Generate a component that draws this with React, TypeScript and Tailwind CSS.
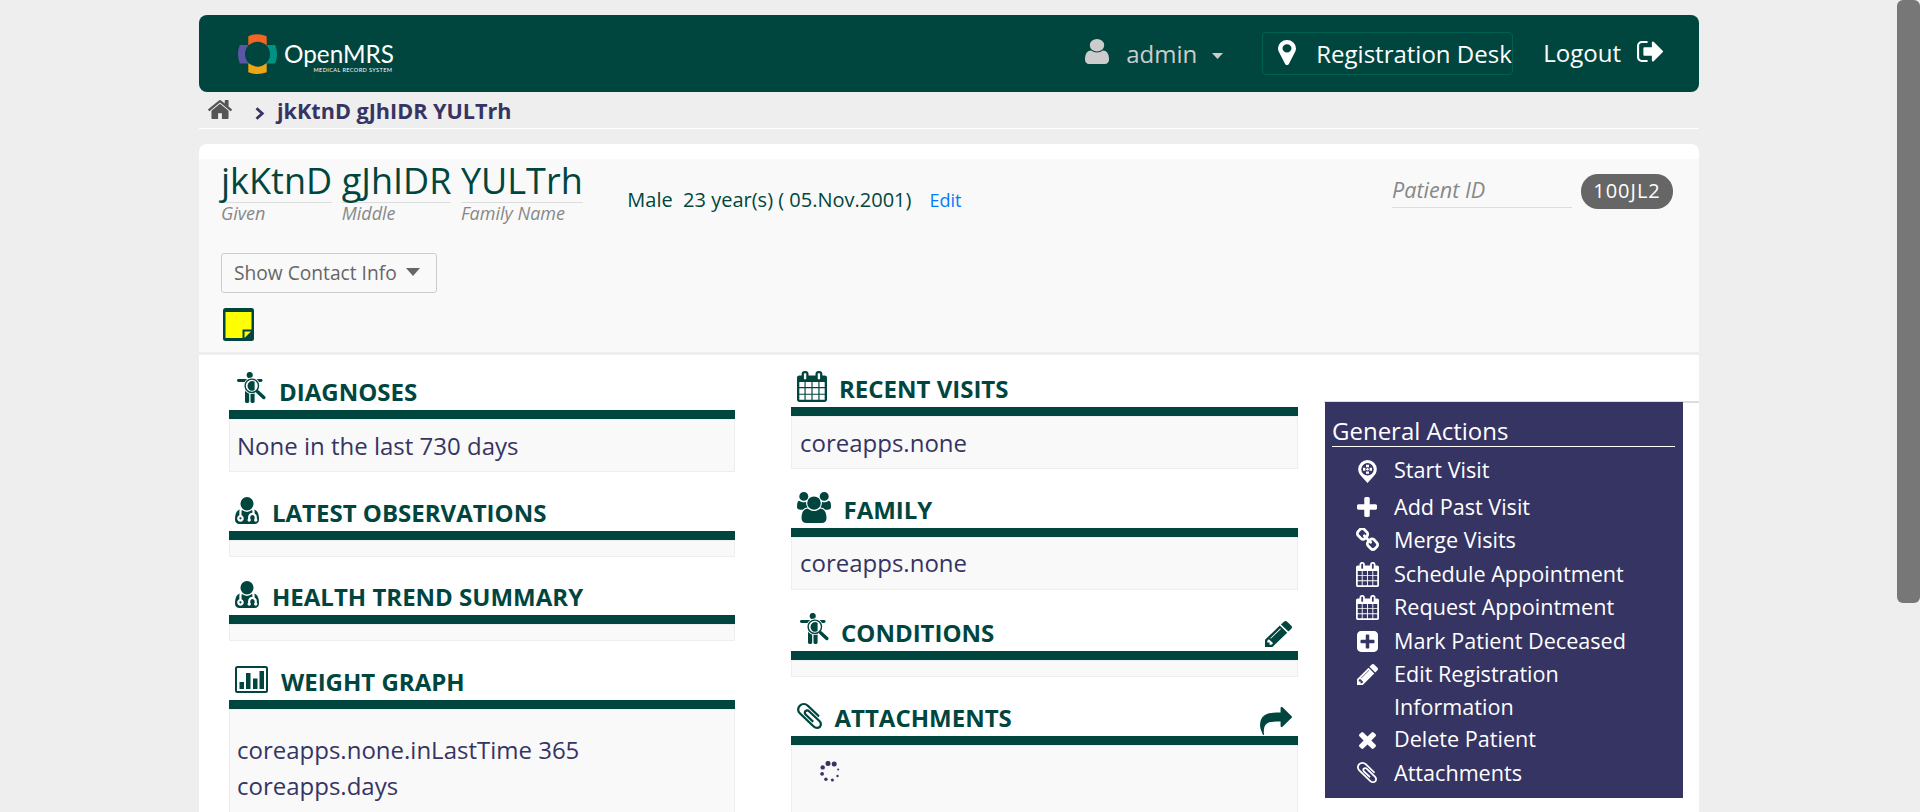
import React from "react";

const PATHS = {
  calendar: {
    box: "64 0 1664 1792",
    d: "M192 1664h288v-288h-288v288zm352 0h320v-288h-320v288zm-352-352h288v-320h-288v320zm352 0h320v-320h-320v320zm-352-384h288v-288h-288v288zm736 736h320v-288h-320v288zm-384-736h320v-288h-320v288zm768 736h288v-288h-288v288zm-384-352h320v-320h-320v320zm-352-864v-288q0-13-9.5-22.5t-22.5-9.5h-64q-13 0-22.5 9.5t-9.5 22.5v288q0 13 9.5 22.5t22.5 9.5h64q13 0 22.5-9.5t9.5-22.5zm736 864h288v-320h-288v320zm-384-384h320v-288h-320v288zm384 0h288v-288h-288v288zm32-480v-288q0-13-9.5-22.5t-22.5-9.5h-64q-13 0-22.5 9.5t-9.5 22.5v288q0 13 9.5 22.5t22.5 9.5h64q13 0 22.5-9.5t9.5-22.5zm384-64v1280q0 52-38 90t-90 38h-1408q-52 0-90-38t-38-90v-1280q0-52 38-90t90-38h128v-96q0-66 47-113t113-47h64q66 0 113 47t47 113v96h384v-96q0-66 47-113t113-47h64q66 0 113 47t47 113v96h128q52 0 90 38t38 90z",
  },
  pencil: {
    box: "128 149 1516 1516",
    d: "M491 1536l91-91-235-235-91 91v107h128v128h107zm523-928q0-22-22-22-10 0-17 7l-542 542q-7 7-7 17 0 22 22 22 10 0 17-7l542-542q7-7 7-17zm-54-192l416 416-832 832h-416v-416zm683 96q0 53-37 90l-166 166-416-416 166-165q36-38 90-38 53 0 91 38l235 234q37 39 37 91z",
  },
  plus: {
    box: "192 128 1408 1408",
    d: "M1600 736v192q0 40-28 68t-68 28h-416v416q0 40-28 68t-68 28h-192q-40 0-68-28t-28-68v-416h-416q-40 0-68-28t-28-68v-192q0-40 28-68t68-28h416v-416q0-40 28-68t68-28h192q40 0 68 28t28 68v416h416q40 0 68 28t28 68z",
  },
  times: {
    box: "302 366 1188 1188",
    d: "M1490 1322q0 40-28 68l-136 136q-28 28-68 28t-68-28l-294-294-294 294q-28 28-68 28t-68-28l-136-136q-28-28-28-68t28-68l294-294-294-294q-28-28-28-68t28-68l136-136q28-28 68-28t68 28l294 294 294-294q28-28 68-28t68 28l136 136q28 28 28 68t-28 68l-294 294 294 294q28 28 28 68z",
  },
  plusSquare: {
    box: "128 128 1536 1536",
    d: "M1408 960v-128q0-26-19-45t-45-19h-320v-320q0-26-19-45t-45-19h-128q-26 0-45 19t-19 45v320h-320q-26 0-45 19t-19 45v128q0 26 19 45t45 19h320v320q0 26 19 45t45 19h128q26 0 45-19t19-45v-320h320q26 0 45-19t19-45zm256-544v960q0 119-84.5 203.5t-203.5 84.5h-960q-119 0-203.5-84.5t-84.5-203.5v-960q0-119 84.5-203.5t203.5-84.5h960q119 0 203.5 84.5t84.5 203.5z",
  },
  home: {
    box: "88 250 1616 1288",
    d: "M1472 992v480q0 26-19 45t-45 19h-384v-384h-256v384h-384q-26 0-45-19t-19-45v-480q0-1 .5-3t.5-3l575-474 575 474q1 2 1 6zm223-69l-62 74q-8 9-21 11h-3q-13 0-21-7l-692-577-692 577q-12 8-24 7-13-2-21-11l-62-74q-8-10-7-23.5t11-21.5l719-599q32-26 76-26t76 26l244 204v-195q0-14 9-23t23-9h192q14 0 23 9t9 23v408l219 182q10 8 11 21.5t-7 23.5z",
  },
  marker: {
    box: "384 128 1024 1536",
    d: "M1152 640q0-106-75-181t-181-75-181 75-75 181 75 181 181 75 181-75 75-181zm256 0q0 109-33 179l-364 774q-16 33-47.5 52t-67.5 19-67.5-19-46.5-52l-365-774q-33-70-33-179 0-212 150-362t362-150 362 150 150 362z",
  },
  user: {
    box: "256 128 1280 1536",
    d: "M1536 1399q0 109-62.5 187t-150.5 78h-854q-88 0-150.5-78t-62.5-187q0-85 8.5-160.5t31.5-152 58.5-131 94-89 134.5-34.5q131 128 313 128t313-128q76 0 134.5 34.5t94 89 58.5 131 31.5 152 8.5 160.5zm-256-887q0 159-112.5 271.5t-271.5 112.5-271.5-112.5-112.5-271.5 112.5-271.5 271.5-112.5 271.5 112.5 112.5 271.5z",
  },
  signout: {
    box: "64 256 1568 1280",
    d: "M704 1440q0 4 1 20t.5 26.5-3 23.5-10 19.5-20.5 6.5h-320q-119 0-203.5-84.5t-84.5-203.5v-704q0-119 84.5-203.5t203.5-84.5h320q13 0 22.5 9.5t9.5 22.5q0 4 1 20t.5 26.5-3 23.5-10 19.5-20.5 6.5h-320q-66 0-113 47t-47 113v704q0 66 47 113t113 47h312l11.5 1 11.5 3 8 5.5 7 9 2 13.5zm928-544q0 26-19 45l-544 544q-19 19-45 19t-45-19-19-45v-288h-448q-26 0-45-19t-19-45v-384q0-26 19-45t45-19h448v-288q0-26 19-45t45-19 45 19l544 544q19 19 19 45z",
  },
  share: {
    box: "0 64 1792 1600",
    d: "M1792 640q0 26-19 45l-512 512q-19 19-45 19t-45-19-19-45v-256h-224q-98 0-175.5 6t-154 21.5-133 42.5-105.5 69.5-80 101-48.5 138.5-17.5 181q0 55 5 123 0 6 2.5 23.5t2.5 26.5q0 15-8.5 25t-23.5 10q-16 0-28-17-7-9-13-22t-13.5-30-10.5-24q-127-285-127-451 0-199 53-333 162-403 875-403h224v-256q0-26 19-45t45-19 45 19l512 512q19 19 19 45z",
  },
  chain: {
    box: "80 80 1632 1568",
    d: "M1520 1216q0-40-28-68l-208-208q-28-28-68-28-42 0-72 32 3 3 19 18.5t21.5 21.5 15 19 13 25.5 3.5 27.5q0 40-28 68t-68 28q-15 0-27.5-3.5t-25.5-13-19-15-21.5-21.5-18.5-19q-33 31-33 73 0 40 28 68l206 207q27 27 68 27 40 0 68-26l147-146q28-28 28-67zm-703-705q0-40-28-68l-206-207q-28-28-68-28-39 0-68 27l-147 146q-28 28-28 67 0 40 28 68l208 208q27 27 68 27 42 0 72-31-3-3-19-18.5t-21.5-21.5-15-19-13-25.5-3.5-27.5q0-40 28-68t68-28q15 0 27.5 3.5t25.5 13 19 15 21.5 21.5 18.5 19q33-31 33-73zm895 705q0 120-85 203l-147 146q-83 83-203 83-121 0-204-85l-206-207q-83-83-83-203 0-123 88-209l-88-88q-86 88-208 88-120 0-204-84l-208-208q-84-84-84-204t85-203l147-146q83-83 203-83 121 0 204 85l206 207q83 83 83 203 0 123-88 209l88 88q86-88 208-88 120 0 204 84l208 208q84 84 84 204z",
  },
  users: {
    box: "0 0 1920 1792",
    d: "M593 896q-162 5-265 128h-134q-82 0-138-40.5t-56-118.5q0-353 124-353 6 0 43.5 21t97.5 42.5 119 21.5q67 0 133-23-5 37-5 66 0 139 81 256zm1071 637q0 120-73 189.5t-194 69.5h-874q-121 0-194-69.5t-73-189.5q0-53 3.5-103.5t14-109 26.5-108.5 43-97.5 62-81 85.5-53.5 111.5-20q10 0 43 21.5t73 48 107 48 135 21.5 135-21.5 107-48 73-48 43-21.5q61 0 111.5 20t85.5 53.5 62 81 43 97.5 26.5 108.5 14 109 3.5 103.5zm-1024-1277q0 106-75 181t-181 75-181-75-75-181 75-181 181-75 181 75 75 181zm704 384q0 159-112.5 271.5t-271.5 112.5-271.5-112.5-112.5-271.5 112.5-271.5 271.5-112.5 271.5 112.5 112.5 271.5zm576 225q0 78-56 118.5t-138 40.5h-134q-103-123-265-128 81-117 81-256 0-29-5-66 66 23 133 23 59 0 119-21.5t97.5-42.5 43.5-21q124 0 124 353zm-128-609q0 106-75 181t-181 75-181-75-75-181 75-181 181-75 181 75 75 181z",
  },
  doctor: {
    box: "64 128 1408 1544",
    d: "M448 1344q0 26-19 45t-45 19-45-19-19-45 19-45 45-19 45 19 19 45zm1024 69q0 121-73 190t-194 69h-874q-121 0-194-69t-73-190q0-68 5.5-131t24-138 47.5-132.5 81-103 120-60.5q-22 52-22 120v203q-58 20-93 70t-35 111q0 80 56 136t136 56 136-56 56-136q0-61-35.5-111t-92.5-70v-203q0-62 25-93 132 104 295 104t295-104q25 31 25 93v64q-106 0-181 75t-75 181v89q-32 29-32 71 0 40 28 68t68 28 68-28 28-68q0-42-32-71v-89q0-52 38-90t90-38 90 38 38 90v89q-32 29-32 71 0 40 28 68t68 28 68-28 28-68q0-42-32-71v-89q0-68-34.5-127.5t-93.5-93.5q0-10 .5-42.5t0-48-2.5-41.5-7-47-13-40q68 15 120 60.5t81 103 47.5 132.5 24 138 5.5 131zm-320-901q0 159-112.5 271.5t-271.5 112.5-271.5-112.5-112.5-271.5 112.5-271.5 271.5-112.5 271.5 112.5 112.5 271.5z",
  },
  clip: {
    box: "196 132 1400 1528",
    d: "M1596 1385q0 117-79 196t-196 79q-135 0-235-100l-777-776q-113-115-113-271 0-159 110-270t269-111q158 0 273 113l605 606q10 10 10 22 0 16-30.5 46.5t-46.5 30.5q-13 0-23-10l-606-607q-79-77-181-77-106 0-179 75t-73 181q0 105 76 181l776 777q63 63 145 63 64 0 106-42t42-106q0-82-63-145l-581-581q-26-24-60-24-29 0-48 19t-19 48q0 32 25 59l410 410q10 10 10 22 0 16-31 47t-47 31q-12 0-22-10l-410-410q-63-61-63-149 0-82 57-139t139-57q88 0 149 63l581 581q100 98 100 235z",
  },
};

function Icon({ name, className }: { name: keyof typeof PATHS; className: string }) {
  const { box, d } = PATHS[name];
  return (
    <svg viewBox={box} preserveAspectRatio="none" fill="currentColor" className={`block shrink-0 ${className}`}>
      <path d={d} />
    </svg>
  );
}

function DiagnosisIcon({ className }: { className: string }) {
  return (
    <svg viewBox="0 0 29 31" className={`block h-[31px] w-[29px] shrink-0 ${className}`}>
      <g fill="currentColor">
        <circle cx="12.7" cy="3" r="3.1" />
        <rect x="0" y="7.1" width="25.5" height="2.8" rx="1.4" />
        <path d="M8 8h9.6v21.6q0 1.4-1.4 1.4h-1.3q-1.4 0-1.4-1.4V21h-1.3v8.6q0 1.4-1.4 1.4H9.4Q8 31 8 29.6z" />
      </g>
      <circle cx="14.8" cy="13.8" r="8.3" fill="#fff" />
      <circle cx="14.8" cy="13.8" r="6.7" fill="#fff" stroke="currentColor" strokeWidth="1.4" />
      <path d="M12.4 10q2.6-1.6 5.2-.3v8.4q-2.600 1.400-5.200-.2-1.900-1.600-1.900-3.900t1.900-4z" fill="currentColor" />
      <path d="M20.600 19.700l6.200 5.800" stroke="currentColor" strokeWidth="3.400" strokeLinecap="round" />
    </svg>
  );
}

function ChartIcon({ className }: { className: string }) {
  return (
    <svg viewBox="0 0 33 27" className={`block h-[27px] w-[33px] shrink-0 ${className}`}>
      <rect x="1" y="1" width="31" height="25" rx="1.5" fill="none" stroke="currentColor" strokeWidth="2" />
      <path d="M4.500 16h4.500v7h-4.500zM11 7h4.500v16h-4.500zM18 12.500h4.500V23h-4.500zM24.500 5h4.500v18h-4.500z" fill="currentColor" />
    </svg>
  );
}

function StartIcon({ className }: { className: string }) {
  return (
    <svg viewBox="0 0 19 23" className={`block h-[23px] w-[19px] shrink-0 ${className}`}>
      <path d="M9.500 0A9.300 9.300 0 0 1 18.800 9.300c0 3.200-1.700 5.800-4.300 8.200L9.500 23l-5-5.500C1.900 15.100.2 12.500.2 9.300A9.300 9.300 0 0 1 9.500 0z" fill="#fff" />
      <circle cx="9.5" cy="9.3" r="6.2" fill="#363463" />
      <circle cx="9.5" cy="9.3" r="1.2" fill="#fff" />
      <path d="M8 4.800h3v2.400h-3zM8 11.400h3v2.400h-3zM5 7.800h2.400v3H5zM11.600 7.800H14v3h-2.400z" fill="#fff" />
    </svg>
  );
}

function Logo() {
  return (
    <svg viewBox="0 0 170 44" className="mt-[17px] ml-[37px] block h-[44px] w-[170px] shrink-0">
      <path d="M12.300 4.200q9.200-4 18.400 0V16h-18.400z" fill="#f26522" />
      <path d="M12.300 40.300q9.200 3.400 18.400 0V28h-18.400z" fill="#eea616" />
      <path d="M3.800 13q-3.600 9.200 0 18.400H15V13z" fill="#5b57a6" />
      <path d="M39.200 13q3.600 9.200 0 18.400H28V13z" fill="#009384" />
      <circle cx="21.5" cy="22.2" r="12.5" fill="#00463f" />
      <text x="48" y="31" fontFamily="Lato" fontSize="25" fill="#fff" textLength="110" lengthAdjust="spacingAndGlyphs">OpenMRS</text>
      <text x="77.5" y="39.5" fontFamily="Lato" fontSize="5.6" fill="#fff" textLength="78.5">MEDICAL RECORD SYSTEM</text>
    </svg>
  );
}

function Spinner() {
  const dots = [
    [8, 2.4, 2.5], [14.2, 3.1, 2.5], [18.2, 8.5, 1], [17.5, 15, 1.2],
    [12.4, 18.9, 1.5], [5.9, 18.2, 1.7], [2.1, 12.8, 1.9], [2.7, 6.4, 2.2],
  ];
  return (
    <svg viewBox="0 0 21 21" className="mt-[15px] ml-[28px] block size-[21px]" fill="#363463">
      {dots.map(([x, y, r]) => (
        <circle key={`${x}-${y}`} cx={x} cy={y} r={r} />
      ))}
    </svg>
  );
}

function Section({
  icon, title, head, gap, action, children,
}: {
  icon: React.ReactNode; title: string; head: string; gap: string; action?: React.ReactNode; children?: React.ReactNode;
}) {
  return (
    <section className="text-[#00463f]">
      <div className={`flex items-end border-b-[9px] border-[#00463f] ${head}`}>
        {icon}
        <h3 className={`text-[24px] leading-[36px] font-bold whitespace-nowrap ${gap}`}>{title}</h3>
        {action}
      </div>
      <div className="min-h-[17px] border border-[#eee] bg-[#f9f9f9] text-[24px] leading-[36px] text-[#363463]">{children}</div>
    </section>
  );
}

function NamePart({ value, label }: { value: string; label: string }) {
  return (
    <div className="mr-[9.6px]">
      <div className="h-[44px] border-b border-[#ddd] text-[36px] leading-[43px] whitespace-nowrap">{value}</div>
      <div className="text-[18px] leading-[20px] text-[#888] italic">{label}</div>
    </div>
  );
}

function Action({ h, icon, children }: { h: string; icon: React.ReactNode; children: React.ReactNode }) {
  return (
    <li className={`flex ${h}`}>
      <span className="ml-[23px] flex w-[24px] shrink-0 justify-center">{icon}</span>
      <span className="ml-[15px] w-[250px]">{children}</span>
    </li>
  );
}

export default function App() {
  return (
    <div className="flex h-[812px] w-[1920px] overflow-hidden bg-[#eee] font-['Open_Sans',sans-serif]">
      <div className="ml-[199px] w-[1500px] shrink-0">
        <header className="mt-[15px] flex h-[77px] items-start rounded-[8px] bg-[#00463f] text-[24px] leading-[36px] text-white">
          <Logo />
          <div className="ml-auto flex text-[#ccc]">
            <Icon name="user" className="mt-[24px] h-[25px] w-[24px]" />
            <span className="mt-[21px] ml-[17px]">admin</span>
            <svg viewBox="0 0 11 6" className="mt-[38px] ml-[15px] h-[6px] w-[11px]" fill="currentColor">
              <path d="M0 0h11L5.500 6z" />
            </svg>
          </div>
          <div className="mt-[17px] ml-[39px] flex h-[43px] w-[251px] overflow-hidden rounded-[4px] border border-[#00604f] whitespace-nowrap">
            <Icon name="marker" className="mt-[7px] ml-[15px] h-[25px] w-[18px]" />
            <span className="mt-[3px] ml-[20px]">Registration Desk</span>
          </div>
          <span className="mt-[20px] ml-[30px]">Logout</span>
          <Icon name="signout" className="mt-[26px] mr-[36px] ml-[16px] h-[21px] w-[26px]" />
        </header>

        <nav className="flex h-[37px] items-start border-b border-white text-[#363463]">
          <Icon name="home" className="mt-[8px] ml-[9px] h-[19px] w-[24px] text-[#555]" />
          <svg viewBox="0 0 10 13" className="mt-[15px] ml-[23px] h-[13px] w-[10px]" fill="none" stroke="currentColor" strokeWidth="2.8">
            <path d="M1.500 1.200l5.800 5.300-5.800 5.300" />
          </svg>
          <span className="mt-px ml-[12px] text-[21.6px] leading-[36px] font-bold">jkKtnD gJhIDR YULTrh</span>
        </nav>

        <main className="mt-[15px] h-[668px] rounded-t-[8px] bg-white pt-[15px]">
          <div className="h-[196px] border-b-[3px] border-[#eee] bg-[#f9f9f9] pl-[22px] text-[#00463f]">
            <div className="flex h-[94px] items-start">
              <NamePart value="jkKtnD" label="Given" />
              <NamePart value="gJhIDR" label="Middle" />
              <NamePart value="YULTrh" label="Family Name" />
              <div className="mt-[26px] ml-[35px] text-[20px] leading-[30px] whitespace-pre">
                Male{"  "}23 year(s) ( 05.Nov.2001)
                <a className="ml-[18px] text-[18px] text-[#007bff]">Edit</a>
              </div>
              <div className="mt-[15px] ml-auto h-[34px] w-[180px] border-b border-[#ddd] text-[21.6px] leading-[31px] text-[#888] italic">Patient ID</div>
              <div className="mt-[15px] mr-[26px] ml-[9px] h-[35px] w-[92px] rounded-[17px] bg-[#666] text-center text-[20px] leading-[34px] tracking-[1px] text-white">100JL2</div>
            </div>
            <button className="flex h-[40px] w-[216px] items-start rounded-[3px] border border-[#ccc] text-[19.2px] leading-[38px] text-[#666]">
              <span className="ml-[12px] whitespace-nowrap">Show Contact Info</span>
              <svg viewBox="0 0 14 8" className="mt-[14px] ml-[9px] h-[8px] w-[14px] shrink-0" fill="currentColor">
                <path d="M0 0h14L7 8z" />
              </svg>
            </button>
            <svg viewBox="0 0 31 33" className="mt-[15px] ml-[2px] block h-[33px] w-[31px]">
              <rect width="31" height="33" rx="2.5" fill="#00463f" />
              <path d="M2.500 4H28.500v17.500h-9V30H2.500z" fill="#ff0" />
              <path d="M21.500 23.500h6.500L21.500 30z" fill="#ff0" />
            </svg>
          </div>

          <div className="flex items-start">
            <div className="ml-[30px] w-[506px]">
              <Section head="h-[64px]" icon={<DiagnosisIcon className="mb-[7px] ml-[8px]" />} title="DIAGNOSES" gap="ml-[13px]">
                <p className="h-[51px] pt-[8px] pl-[7px]">None in the last 730 days</p>
              </Section>
              <Section head="h-[68px]" icon={<Icon name="doctor" className="mb-[7px] ml-[6px] h-[27px] w-[24px]" />} title="LATEST OBSERVATIONS" gap="ml-[13px]" />
              <Section head="h-[67px]" icon={<Icon name="doctor" className="mb-[7px] ml-[6px] h-[27px] w-[24px]" />} title="HEALTH TREND SUMMARY" gap="ml-[13px]" />
              <Section head="h-[68px]" icon={<ChartIcon className="mb-[7px] ml-[6px]" />} title="WEIGHT GRAPH" gap="ml-[13px]">
                <p className="h-[140px] w-[400px] pt-[22px] pl-[7px]">coreapps.none.inLastTime 365 coreapps.days</p>
              </Section>
            </div>

            <div className="ml-[56px] w-[507px]">
              <Section head="h-[61px]" icon={<Icon name="calendar" className="mb-[5px] ml-[6px] h-[31px] w-[30px]" />} title="RECENT VISITS" gap="ml-[12px]">
                <p className="h-[51px] pt-[8px] pl-[8px]">coreapps.none</p>
              </Section>
              <Section head="h-[68px]" icon={<Icon name="users" className="mb-[5px] ml-[6px] h-[31px] w-[34px]" />} title="FAMILY" gap="ml-[12.5px]">
                <p className="h-[51px] pt-[7px] pl-[8px]">coreapps.none</p>
              </Section>
              <Section
                head="h-[70px]"
                icon={<DiagnosisIcon className="mb-[7px] ml-[9px]" />}
                title="CONDITIONS"
                gap="ml-[12px]"
                action={<Icon name="pencil" className="mr-[6px] mb-[4px] ml-auto h-[26px] w-[27px]" />}
              />
              <Section
                head="h-[68px]"
                icon={<Icon name="clip" className="mb-[7px] ml-[6px] h-[26px] w-[25px]" />}
                title="ATTACHMENTS"
                gap="ml-[12.5px]"
                action={<Icon name="share" className="mr-[6px] mb-[1px] ml-auto h-[28px] w-[32px]" />}
              >
                <div className="h-[100px] overflow-hidden"><Spinner /></div>
              </Section>
            </div>

            <aside className="mt-[46px] ml-[26px] w-[375px] border-t-2 border-[#ddd]">
              <div className="-mt-px ml-px h-[396px] w-[358px] bg-[#363463] pt-[13px] pr-[8px] pl-[7px] text-white">
                <h3 className="h-[32px] border-b border-white text-[24px] leading-[32px]">General Actions</h3>
                <ul className="mt-[6px] text-[21.6px] leading-[33px]">
                  <Action h="h-[37px]" icon={<StartIcon className="mt-[7px]" />}>Start Visit</Action>
                  <Action h="h-[33px]" icon={<Icon name="plus" className="mt-[7px] size-[20px]" />}>Add Past Visit</Action>
                  <Action h="h-[34px]" icon={<Icon name="chain" className="mt-[5px] size-[23px]" />}>Merge Visits</Action>
                  <Action h="h-[33px]" icon={<Icon name="calendar" className="mt-[5px] h-[25px] w-[23px]" />}>Schedule Appointment</Action>
                  <Action h="h-[34px]" icon={<Icon name="calendar" className="mt-[5px] h-[25px] w-[23px]" />}>Request Appointment</Action>
                  <Action h="h-[33px]" icon={<Icon name="plusSquare" className="mt-[7px] size-[21px]" />}>Mark Patient Deceased</Action>
                  <Action h="h-[65px]" icon={<Icon name="pencil" className="mt-[7px] size-[21px]" />}>Edit Registration Information</Action>
                  <Action h="h-[34px]" icon={<Icon name="times" className="mt-[10px] size-[17px]" />}>Delete Patient</Action>
                  <Action h="h-[33px]" icon={<Icon name="clip" className="mt-[6px] h-[21px] w-[20px]" />}>Attachments</Action>
                </ul>
              </div>
            </aside>
          </div>
        </main>
      </div>
      <div className="ml-auto h-[603px] w-[23px] rounded-[6px] bg-[#777]" />
    </div>
  );
}
